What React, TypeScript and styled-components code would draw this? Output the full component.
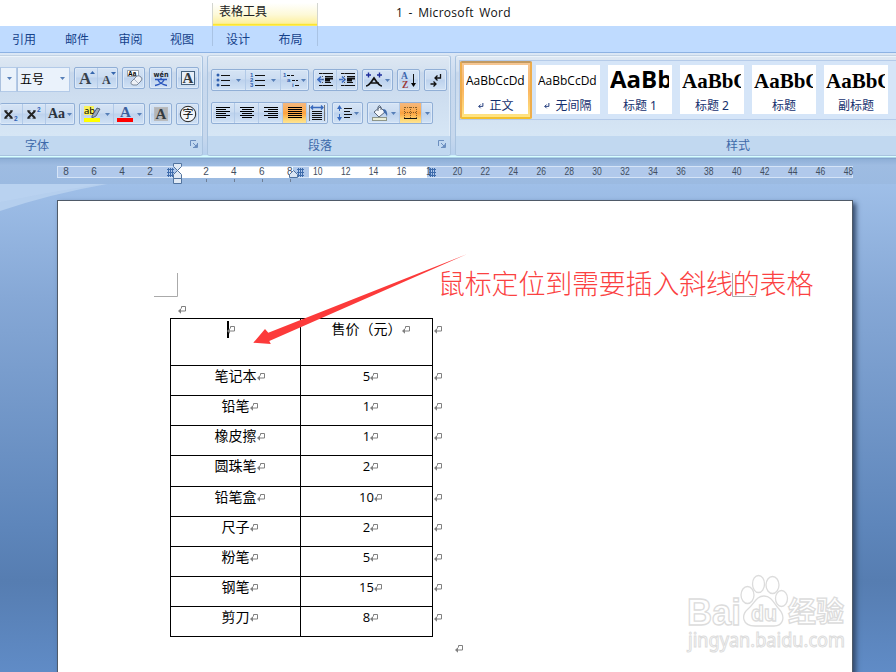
import React from 'react';
import styled, { createGlobalStyle, css } from 'styled-components';

const GlobalStyle = createGlobalStyle`
  * { box-sizing: border-box; }
  body { margin: 0; overflow: hidden; }
`;

const UI = '"Noto Sans", "Noto Sans CJK SC", sans-serif';

const Shell = styled.div`
  width: 896px;
  height: 672px;
  display: flex;
  flex-direction: column;
  overflow: hidden;
  font: 12px ${UI};
  background: #9fbfe8;
`;

const TitleBar = styled.header`
  flex: 0 0 26px;
  height: 26px;
  display: flex;
  background: #fff;
  color: #111;
`;

const ContextTitle = styled.div`
  margin: 3px 0 0 212px;
  width: 106px;
  height: 23px;
  padding-left: 6px;
  line-height: 18px;
  color: #222;
  background: linear-gradient(#fff, #fdf9d8 50%, #fdf0a0 88%, #fbe000 96%, #fff8c0);
  border: solid #d3d6d0;
  border-width: 0 1px;
`;

const WindowTitle = styled.div`
  margin-left: 78px;
  line-height: 26px;
  font-family: "Open Sans", "Noto Sans", sans-serif;
  font-size: 12px;
  letter-spacing: 0.3px;
  word-spacing: 2px;
  white-space: pre;
`;

const TabBar = styled.nav`
  flex: 0 0 27px;
  height: 27px;
  display: flex;
  background: #bfdbff;
  border-bottom: 1px solid #8db2e3;
  color: #15428b;
`;

const Tab = styled.div<{ $w: number }>`
  flex: 0 0 ${p => p.$w}px;
  height: 26px;
  text-align: center;
  line-height: 28px;
`;

const ContextTabs = styled.div`
  display: flex;
  margin-left: 3px;
  width: 106px;
  height: 20px;
  border: solid #a9c3e4;
  border-width: 0 1px;
`;

const Ribbon = styled.section`
  flex: 0 0 106px;
  display: flex;
  gap: 4px;
  padding-top: 2px;
  background: linear-gradient(#dce7f5, #c8d9ee 25%, #c7d8ed 80%, #b6d0ee 97%, #d7ffff 98%, #d7ffff 99%, #87a9d2);
  border-bottom: 1px solid #84a5cd;
`;

const Group = styled.div<{ $w: number; $first?: boolean }>`
  flex: 0 0 ${p => p.$w}px;
  height: 101px;
  display: flex;
  flex-direction: column;
  border: 1px solid #a9c3df;
  border-top-color: #c3d3e4;
  box-shadow: inset 0 1px #edf4fb, inset -1px 0 #e2edf8;
  border-radius: ${p => (p.$first ? '0 3px 3px 0' : '3px')};
  border-left-width: ${p => (p.$first ? 0 : 1)}px;
  background: linear-gradient(#dee8f3, #d4e1f0 15%, #c8d8ec 17%, #d6e6f5 80%);
  overflow: hidden;
`;

const GroupBody = styled.div<{ $pad?: string }>`
  flex: 0 0 80px;
  padding: ${p => p.$pad || 0};
`;

const GroupLabel = styled.div`
  flex: 1;
  display: grid;
  grid-template-columns: 14px 1fr 12px;
  align-items: center;
  background: #c1d8f0;
  color: #3e6aaa;
  text-align: center;
  line-height: 18px;
  svg { margin-bottom: 4px; }
`;

const ToolRow = styled.div<{ $top: number }>`
  display: flex;
  height: 22px;
  gap: 4px;
  margin-top: ${p => p.$top}px;
`;

const ComboPair = styled.div`
  display: flex;
  flex: 0 0 70px;
`;

const Combo = styled.div<{ $w: number }>`
  flex: 0 0 ${p => p.$w}px;
  height: 25px;
  display: flex;
  justify-content: space-between;
  align-items: center;
  padding: 0 4px 2px 2px;
  background: #eaf2fb;
  border: 1px solid #b3cae8;
  border-left-color: #abc1de;
  color: #000;
`;

const ButtonSet = styled.div<{ $open?: boolean }>`
  display: flex;
  height: 22px;
  border: 1px solid #91afd6;
  border-left-width: ${p => (p.$open ? 0 : 1)}px;
  border-radius: 2px;
  overflow: hidden;
  background: linear-gradient(#d6e4f5, #cbdcf1 45%, #bdd2ed 50%, #d1e2f5);
  box-shadow: inset 0 0 0 1px #dce9f8;
`;

const Button = styled.div<{ $w: number; $on?: boolean }>`
  flex: 0 0 ${p => p.$w}px;
  display: flex;
  align-items: center;
  justify-content: space-evenly;
  & + & { border-left: 1px solid #b2cae8; }
  ${p => p.$on && css`
    background: linear-gradient(#f4b77e, #fcae55 35%, #fda13e 50%, #fdd877 85%, #ffe394);
  `}
`;

const Glyph = styled.span`
  font: bold 14px "Liberation Serif", serif;
  color: #2b333c;
`;

const Gallery = styled.div`
  height: 60px;
  margin: 4px 0 0 3px;
  display: flex;
  background: #d5e5f8;
  border: 1px solid #b5cbe9;
  border-right: 0;
`;

const StyleTile = styled.div<{ $on?: boolean }>`
  flex: 0 0 72px;
  width: 72px;
  height: 58px;
  padding: 4px;
  ${p => p.$on && css`
    border: 2px solid;
    border-color: #c29a62 #eead4c #f3c02d #eead4c;
    border-radius: 2px;
    background: linear-gradient(#f5c694, #fbb660 50%, #ffe583);
    padding: 2px;
  `}
`;

const TileFace = styled.div`
  height: 49px;
  background: #fff;
  display: flex;
  flex-direction: column;
  color: #15306e;
`;

const Preview = styled.div<{ $font: string; $size: number; $bold?: boolean; $line: number }>`
  flex: 0 0 31px;
  height: 31px;
  margin: 0 3px 0 2px;
  overflow: hidden;
  white-space: nowrap;
  line-height: ${p => p.$line}px;
  color: #000;
  font-family: ${p => p.$font};
  font-size: ${p => p.$size}px;
  font-weight: ${p => (p.$bold ? 700 : 400)};
`;

const TileName = styled.div`
  display: flex;
  align-items: center;
  justify-content: center;
  gap: 5px;
  line-height: 19px;
  white-space: nowrap;
`;

const RulerBand = styled.div`
  flex: 0 0 25px;
  padding: 7px 0 0 57px;
  background: linear-gradient(#8fafd7, #9ebce2 25%, #9bbae1);
`;

const RulerSvg = styled.svg`
  display: block;
  font: 10px "Liberation Sans", sans-serif;
`;

const Workspace = styled.main`
  flex: 1;
  position: relative;
  padding: 16px 43px 0 57px;
  background: linear-gradient(#9fbfe8, #86a8d6 22%, #5e86bb 66%, #567db1 77%, #6390cd);
`;

const Overlay = styled.svg`
  position: absolute;
  left: 0;
  top: 0;
`;

const Page = styled.article`
  position: relative;
  height: 500px;
  padding: 100px 0 0 112px;
  background: #fff;
  border: 1px solid #4f5a68;
  box-shadow: 3px 3px 5px #33496b;
`;

const Mark = styled.div<{ $left: number; $top?: number }>`
  height: 17px;
  padding: ${p => p.$top || 0}px 0 0 ${p => p.$left}px;
`;

const Table = styled.div`
  width: 272px;
  display: grid;
  grid-template-columns: 130px 132px 10px;
`;

const Cell = styled.div<{ $h: number; $last?: boolean; $digits?: boolean; $pull?: number }>`
  height: ${p => p.$h + (p.$last ? 1 : 0)}px;
  display: flex;
  justify-content: center;
  align-items: flex-start;
  padding-right: ${p => p.$pull || 0}px;
  border: solid #000;
  border-width: 1px 0 ${p => (p.$last ? 1 : 0)}px 1px;
  font-family: ${p => (p.$digits ? '"Open Sans", sans-serif' : '"Noto Sans CJK SC", sans-serif')};
  font-size: ${p => (p.$digits ? 13 : 14)}px;
  line-height: ${p => (p.$digits ? 20 : 19)}px;
  color: #000;
  svg { margin: 7px -8px 0 0; flex: none; }
`;

const RowEnd = styled.div`
  border-left: 1px solid #000;
  padding: 8px 0 0 1px;
  svg { display: block; }
`;

const Caret = styled.i`
  width: 2px;
  height: 17px;
  margin: 2px -2px 0 0;
  background: #000;
`;

const Callout = styled.div`
  position: absolute;
  left: 438px;
  top: 79px;
  white-space: nowrap;
  font: 300 27px/40px "Noto Sans CJK SC", sans-serif;
  letter-spacing: -0.2px;
  color: #fb4141;
`;

const Arrow = ({ c = '#567fb8' }: { c?: string }) => (
  <svg width="5" height="3" viewBox="0 0 5 3"><path d="M0 0h5L2.5 3z" fill={c} /></svg>
);

const Return = ({ c = '#808080' }: { c?: string }) => (
  <svg width="8" height="8" viewBox="0 0 8 8" fill="none" stroke={c}>
    <path d="M3.5 2.5v-2h4v4.500H2" />
    <path d="M0 5L3 2.200v5.600z" fill={c} stroke="none" />
  </svg>
);

const Hook = ({ c = '#777', size = 8 }: { c?: string; size?: number }) => (
  <svg width={size} height={size} viewBox="0 0 8 8" fill="none" stroke={c} strokeWidth="1.300">
    <path d="M6.500 0v4.500H1M3.500 2l-2.500 2.500L3.500 7" />
  </svg>
);

const Launcher = () => (
  <svg width="8" height="8" viewBox="0 0 8 8" fill="none" stroke="#6b8ebf">
    <path d="M.5 6V.5H6" /><path d="M3 3l3 3M7.500 3v4.500H3" /><path d="M4 7l3-3v3z" fill="#6b8ebf" stroke="none" />
  </svg>
);

const Lines = ({ rows, w = 16 }: { rows: [number, number][]; w?: number }) => (
  <svg width={w} height="14" viewBox={`0 0 ${w} 14`} shapeRendering="crispEdges">
    {rows.map(([a, b], i) => <path key={i} d={`M${a} ${i * 2 + 1.5}H${b}`} stroke="#000" />)}
  </svg>
);

const ListIcon = ({ kind }: { kind: string }) => (
  <svg width="16" height="16" viewBox="0 0 16 16" fontFamily="Liberation Sans" fontWeight="bold" fontSize="6" fill="#2f5fae">
    {kind === 'dots' && [3, 8, 13].map(y => (
      <g key={y}><circle cx="2" cy={y} r="1.500" /><path d={`M5 ${y + 0.5}h9`} stroke="#111" /></g>
    ))}
    {kind === 'nums' && [3, 8, 13].map((y, i) => (
      <g key={y}><text x="0" y={y + 2}>{i + 1}</text><path d={`M5 ${y + 0.5}h10`} stroke="#111" /></g>
    ))}
    {kind === 'tree' && (
      <g>
        <text x="0" y="5">1</text><text x="4" y="10">a</text><text x="9" y="15">i</text>
        <path d="M4 3.500h7M9 8.500h6" stroke="#111" strokeDasharray="3 1" /><path d="M12 13.500h4" stroke="#111" />
      </g>
    )}
  </svg>
);

const Indent = ({ right }: { right?: boolean }) => (
  <svg width="17" height="16" viewBox="0 0 17 16" fill="none">
    <path d="M2 1.500h14M8 4.500h8M8 10.500h6M2 13.500h14" stroke="#111" />
    <path d="M8 6.500h8M8 8.500h5" stroke="#111" strokeWidth="2" />
    <path d={right ? 'M0 7.500h4M3 4.500l3 3-3 3' : 'M2 7.500h5M4 4.500l-3 3 3 3'} stroke="#3d6cc0" strokeWidth="1.600" />
    <path d="M5.500 1v14" stroke="#555" strokeDasharray="1 2" />
  </svg>
);

const Eraser = () => (
  <svg width="18" height="18" viewBox="0 0 18 18">
    <path d="M2.500 1.500h11v6h-11z" fill="#fff" stroke="#77818d" strokeWidth=".7" />
    <text x="3" y="7" fontSize="6.500" fontFamily="Liberation Sans" fontWeight="bold">Aa</text>
    <path d="M6 13l6-6q2-1 4 1t0 4l-4 4H8q-3-1-2-3z" fill="#eef1f6" stroke="#7b8799" />
    <path d="M9 10l4 4" stroke="#a9b3c3" />
  </svg>
);

const Pinyin = () => (
  <svg width="18" height="18" viewBox="0 0 18 18">
    <text x="1.500" y="8" fontSize="7.500" fontFamily="DejaVu Sans" fontWeight="bold" textLength="15" lengthAdjust="spacingAndGlyphs" fill="#20242c">wén</text>
    <path d="M3 10.500h12M6 11q2 4 9 5.500M12 11q-2 4-9 5.500M9 8.500v2" fill="none" stroke="#2855bd" strokeWidth="1.400" />
  </svg>
);

const BoxedA = ({ filled }: { filled?: boolean }) => (
  <svg width="18" height="18" viewBox="0 0 18 18">
    <rect x="2.500" y="2.500" width="13" height="13" fill={filled ? '#b3b5b8' : '#e8eff8'} stroke={filled ? '#b9bbbd' : '#45627f'} />
    <text x="9" y="14" textAnchor="middle" fontSize="15" fontWeight="bold" fontFamily="Liberation Serif" fill="#333a40">A</text>
  </svg>
);

const Circled = () => (
  <svg width="18" height="18" viewBox="0 0 18 18">
    <circle cx="9" cy="9" r="7.700" fill="#f3f6fa" stroke="#222" />
    <text x="9" y="13" textAnchor="middle" fontSize="11" fontFamily="Noto Sans CJK SC">字</text>
  </svg>
);

const Highlighter = () => (
  <svg width="18" height="18" viewBox="0 0 18 18">
    <path d="M1 1h10v9H1z" fill="#faf35c" />
    <text x="1" y="9" fontSize="9.500" fontFamily="Noto Sans">ab</text>
    <path d="M9 11l5-8 3 1-4 7-4 2z" fill="#9caabd" stroke="#3b4a5f" strokeWidth=".8" />
    <path d="M1 13h16v4H1z" fill="#ff0" />
  </svg>
);

const FontColor = () => (
  <svg width="18" height="18" viewBox="0 0 18 18">
    <text x="9.500" y="11.500" textAnchor="middle" fontSize="15" fontWeight="bold" fontFamily="Liberation Serif" fill="#3b5f9d">A</text>
    <path d="M1 13h16v4H1z" fill="#f00" />
  </svg>
);

const GrowA = ({ up }: { up?: boolean }) => (
  <svg width="18" height="18" viewBox="0 0 18 18">
    <text x={up ? 2 : 3} y="14.500" fontSize={up ? 17 : 12} fontWeight="bold" fontFamily="Liberation Serif" fill="#39424c">A</text>
    <path d={up ? 'M13 5l2.500-3L18 5z' : 'M12 3h5l-2.500 3z'} fill="#3566ad" />
  </svg>
);

const Script = ({ sup }: { sup?: boolean }) => (
  <svg width="18" height="18" viewBox="0 0 18 18">
    <path d="M3 6l7 7M10 6l-7 7" stroke="#222" strokeWidth="1.900" />
    <path d="M2 5.800h3.500M8 5.800h3M2 13.200h3.500M7.500 13.200H11" stroke="#222" strokeWidth=".8" />
    <text x="12" y={sup ? 7 : 16} fontSize="6.500" fontWeight="bold" fontFamily="Liberation Sans" fill="#2f61b5">2</text>
  </svg>
);

const ScaleA = () => (
  <svg width="18" height="16" viewBox="0 0 18 16" fill="none">
    <path d="M1 14q3 0 8-8 5 8 8 8M5 11h9" stroke="#111" strokeWidth="1.700" />
    <path d="M1 3h5M3.500 .5v5M12 3h5M14.500 .5v5" stroke="#1e2e9c" strokeWidth="1.400" />
  </svg>
);

const SortIcon = () => (
  <svg width="16" height="18" viewBox="0 0 16 18">
    <text x="0" y="8" fontSize="9.500" fontWeight="bold" fontFamily="Liberation Serif" fill="#3c66ad">A</text>
    <text x="1" y="17" fontSize="9.500" fontWeight="bold" fontFamily="Liberation Serif" fill="#9c3a3a">Z</text>
    <path d="M12.500 3v11" stroke="#111" /><path d="M10 12h5l-2.500 4z" />
  </svg>
);

const ParaMarks = () => (
  <svg width="14" height="16" viewBox="0 0 14 16" fill="none" stroke="#111" strokeWidth="1.300">
    <path d="M11.500 2v4H6M8.500 3.500L6 6l2.500 2.500M1.500 12h5M4.500 9.500L7 12l-2.500 2.500" />
  </svg>
);

const Distribute = () => (
  <svg width="18" height="18" viewBox="0 0 18 18" fill="none">
    <path d="M1.500 1v16M16.500 1v16" stroke="#777" />
    <path d="M3 3.500h12M5 1.500l-2 2 2 2M13 1.500l2 2-2 2" stroke="#3668bc" strokeWidth="1.300" />
    <path d="M4 7.500h10M4 9.500h10M4 11.500h10M4 13.500h10M4 15.500h10" stroke="#111" shapeRendering="crispEdges" />
  </svg>
);

const Spacing = () => (
  <svg width="16" height="18" viewBox="0 0 16 18" fill="none">
    <path d="M3.500 2v14" stroke="#3668bc" strokeDasharray="5 3" />
    <path d="M1 5l2.500-4L6 5zM1 13l2.500 4L6 13z" fill="#3668bc" />
    <path d="M7.500 4.500H16M7.500 7.500H14M7.500 10.500H16M7.500 13.500H14" stroke="#111" shapeRendering="crispEdges" />
  </svg>
);

const Bucket = () => (
  <svg width="18" height="18" viewBox="0 0 18 18">
    <path d="M3 8l6-5 5 5-6 5z" fill="#f3f6fa" stroke="#59677a" />
    <path d="M7 7V3q1-3 3 0v3" fill="none" stroke="#59677a" />
    <path d="M12 5q5 0 4 8-1-4-3-4z" fill="#426cab" />
    <rect x="1.500" y="13.500" width="14" height="3" fill="#e9edd8" stroke="#8e968a" />
  </svg>
);

const Borders = () => (
  <svg width="15" height="16" viewBox="0 0 15 16" fill="none">
    <path d="M1.500 2.500h12M1.500 7.500h12M1.500 2v11M7.500 2v11M13.500 2v11" stroke="#835c28" strokeDasharray="1 1" shapeRendering="crispEdges" />
    <path d="M1 13.500h13" stroke="#111" />
  </svg>
);

const GridHandle = ({ x }: { x: number }) => (
  <g transform={`translate(${x} 2)`} shapeRendering="crispEdges">
    <path d="M0 1.500h7M0 4.500h7M0 7.500h7M1.500 0v9M3.500 0v9M5.500 0v9" stroke="#3f6cac" />
  </g>
);

const ruler: [number, string][] = [];
for (let n = 8; n >= 2; n -= 2) ruler.push([9 + (8 - n) * 14, String(n)]);
for (let n = 2; n <= 48; n += 2) if (n !== 18) ruler.push([121 + n * 13.97, String(n)]);

const Ruler = () => (
  <RulerSvg width="810" height="18" viewBox="0 0 810 18">
    <rect x=".5" y=".5" width="795" height="11" fill="#b1c9eb" stroke="#d5e4f7" />
    <rect x="121" y="1" width="115" height="11" fill="#fff" />
    <rect x="252" y="1" width="118" height="11" fill="#fff" />
    {ruler.map(([x, t]) => (
      <text key={x} x={x} y="9" textAnchor="middle" fill="#424e60" {...(t.length > 1 ? { textLength: 9.5 } : {})} lengthAdjust="spacingAndGlyphs">{t}</text>
    ))}
    <text x="369" y="9" fill="#424e60">1</text>
    <path d="M149.500 13v3M177.500 13v3M205.500 13v3M233.500 13v3" stroke="#6f7f96" />
    <GridHandle x={110} /><GridHandle x={240} /><GridHandle x={372} />
    <path d="M232.500 11.500V8.500l4-4 4 4v3z" fill="#dae5f3" stroke="#52749f" />
  </RulerSvg>
);

const IndentHandle = styled.svg`
  position: absolute;
  left: 172px;
  top: -21px;
`;

const rows: [string, string, number][] = [
  ['', '售价（元）', 47], ['笔记本', '5', 30], ['铅笔', '1', 30], ['橡皮擦', '1', 30], ['圆珠笔', '2', 31],
  ['铅笔盒', '10', 30], ['尺子', '2', 30], ['粉笔', '5', 30], ['钢笔', '15', 30], ['剪刀', '8', 30],
];

const SERIF = '"Liberation Serif", serif';
const SANS = '"Open Sans", sans-serif';
const tiles = [
  { name: '正文', text: 'AaBbCcDd', font: SANS, size: 12, line: 31, mark: true },
  { name: '无间隔', text: 'AaBbCcDd', font: SANS, size: 12, line: 31, mark: true },
  { name: '标题 1', text: 'AaBb', font: SANS, size: 24, line: 28, bold: true },
  { name: '标题 2', text: 'AaBbC', font: SERIF, size: 21, line: 33, bold: true },
  { name: '标题', text: 'AaBbC', font: SERIF, size: 21, line: 33, bold: true },
  { name: '副标题', text: 'AaBbC', font: SERIF, size: 21, line: 33, bold: true },
];

const LabelText = styled.span<{ $shift: number }>`
  margin-left: ${p => Math.max(p.$shift, 0) * 2}px;
  margin-right: ${p => Math.max(-p.$shift, 0) * 2}px;
`;

const FontGroup = () => (
  <Group $w={203} $first>
    <GroupBody>
      <ToolRow $top={11}>
        <ComboPair>
          <Combo $w={17}><span /><Arrow /></Combo>
          <Combo $w={53}>五号<Arrow /></Combo>
        </ComboPair>
        <ButtonSet><Button $w={22}><GrowA up /></Button><Button $w={20}><GrowA /></Button></ButtonSet>
        <ButtonSet><Button $w={21}><Eraser /></Button></ButtonSet>
        <ButtonSet><Button $w={21}><Pinyin /></Button></ButtonSet>
        <ButtonSet><Button $w={21}><BoxedA /></Button></ButtonSet>
      </ToolRow>
      <ToolRow $top={14}>
        <ButtonSet $open>
          <Button $w={22}><Script /></Button>
          <Button $w={23}><Script sup /></Button>
          <Button $w={29}><Glyph>Aa</Glyph><Arrow /></Button>
        </ButtonSet>
        <ButtonSet>
          <Button $w={33}><Highlighter /><Arrow /></Button>
          <Button $w={31}><FontColor /><Arrow /></Button>
        </ButtonSet>
        <ButtonSet><Button $w={21}><BoxedA filled /></Button></ButtonSet>
        <ButtonSet><Button $w={21}><Circled /></Button></ButtonSet>
      </ToolRow>
    </GroupBody>
    <GroupLabel><span /><LabelText $shift={-65}>字体</LabelText><Launcher /></GroupLabel>
  </Group>
);

const all = (a: number, b: number): [number, number][] => Array(6).fill([a, b]);

const ParagraphGroup = () => (
  <Group $w={244}>
    <GroupBody $pad="0 0 0 3px">
      <ToolRow $top={13}>
        <ButtonSet>
          <Button $w={33}><ListIcon kind="dots" /><Arrow /></Button>
          <Button $w={35}><ListIcon kind="nums" /><Arrow /></Button>
          <Button $w={28}><ListIcon kind="tree" /><Arrow /></Button>
        </ButtonSet>
        <ButtonSet><Button $w={22}><Indent /></Button><Button $w={21}><Indent right /></Button></ButtonSet>
        <ButtonSet><Button $w={29}><ScaleA /><Arrow /></Button></ButtonSet>
        <ButtonSet><Button $w={21}><SortIcon /></Button></ButtonSet>
        <ButtonSet><Button $w={21}><ParaMarks /></Button></ButtonSet>
      </ToolRow>
      <ToolRow $top={11}>
        <ButtonSet>
          <Button $w={22}><Lines rows={[[1, 15], [1, 11], [1, 15], [1, 11], [1, 15], [1, 11]]} /></Button>
          <Button $w={24}><Lines rows={[[1, 15], [3, 13], [1, 15], [3, 13], [1, 15], [3, 13]]} /></Button>
          <Button $w={24}><Lines rows={[[1, 15], [5, 15], [1, 15], [5, 15], [1, 15], [5, 15]]} /></Button>
          <Button $w={24} $on><Lines rows={all(1, 15)} /></Button>
          <Button $w={21}><Distribute /></Button>
        </ButtonSet>
        <ButtonSet><Button $w={29}><Spacing /><Arrow /></Button></ButtonSet>
        <ButtonSet>
          <Button $w={31}><Bucket /><Arrow /></Button>
          <Button $w={22} $on><Borders /></Button>
          <Button $w={11}><Arrow /></Button>
        </ButtonSet>
      </ToolRow>
    </GroupBody>
    <GroupLabel><span /><LabelText $shift={-10}>段落</LabelText><Launcher /></GroupLabel>
  </Group>
);

const StylesGroup = () => (
  <Group $w={560}>
    <GroupBody>
      <Gallery>
        {tiles.map((t, i) => (
          <StyleTile key={t.name} $on={i === 0}>
            <TileFace>
              <Preview $font={t.font} $size={t.size} $bold={t.bold} $line={t.line}>{t.text}</Preview>
              <TileName>{t.mark && <Hook c="#223c7c" size={6} />}{t.name}</TileName>
            </TileFace>
          </StyleTile>
        ))}
      </Gallery>
    </GroupBody>
    <GroupLabel><span /><LabelText $shift={2}>样式</LabelText><span /></GroupLabel>
  </Group>
);

const Watermark = () => (
  <g fill="#fff" stroke="#dcdcdc" strokeWidth="1.300">
    <text x="687" y="441" fontFamily="Liberation Sans" fontWeight="bold" fontSize="36" textLength="54" lengthAdjust="spacingAndGlyphs">Bai</text>
    <ellipse cx="747.500" cy="411" rx="6.500" ry="8.500" />
    <ellipse cx="758.500" cy="400" rx="6" ry="8.500" />
    <ellipse cx="772.500" cy="401" rx="6.500" ry="8.500" />
    <ellipse cx="781.500" cy="414.500" rx="6" ry="8" />
    <path d="M764 412c8 0 10 8 15 13 7 8 4 17-5 17H755c-13 0-14-11-7-17s8-13 16-13z" />
    <text x="751" y="437" fontFamily="Liberation Sans" fontWeight="bold" fontSize="22" textLength="26" lengthAdjust="spacingAndGlyphs">du</text>
    <text x="788" y="438" fontFamily="Noto Sans CJK SC" fontWeight="bold" fontSize="28" textLength="56">经验</text>
    <text x="688" y="463" fontFamily="Noto Sans" fontSize="19" strokeWidth="1" textLength="157" lengthAdjust="spacingAndGlyphs">jingyan.baidu.com</text>
  </g>
);

export default function App() {
  return (
    <Shell>
      <GlobalStyle />
      <TitleBar>
        <ContextTitle>表格工具</ContextTitle>
        <WindowTitle>{'1 - Microsoft Word'}</WindowTitle>
      </TitleBar>
      <TabBar>
        <Tab $w={48}>引用</Tab>
        <Tab $w={58}>邮件</Tab>
        <Tab $w={49}>审阅</Tab>
        <Tab $w={54}>视图</Tab>
        <ContextTabs><Tab $w={50}>设计</Tab><Tab $w={55}>布局</Tab></ContextTabs>
      </TabBar>
      <Ribbon><FontGroup /><ParagraphGroup /><StylesGroup /></Ribbon>
      <RulerBand><Ruler /></RulerBand>
      <Workspace>
        <Overlay width="110" height="30">
          <path d="M0 0H107Q50 10 0 27z" fill="#b5cfee" /><path d="M0 0H100Q50 8 0 18z" fill="#bcd4f1" opacity=".6" />
        </Overlay>
        <IndentHandle width="11" height="22" viewBox="0 0 11 22" fill="#e1eaf5" stroke="#52749f">
          <path d="M1.500 .5h8v3l-4 4 4 4v4h-8v-4l4-4-4-4z" /><path d="M1.500 15.500h8v5h-8z" />
        </IndentHandle>
        <Page>
          <Mark $left={8}><Return /></Mark>
          <Table>
            {rows.map(([a, b, h], i) => (
              <React.Fragment key={a}>
                <Cell $h={h} $last={i === 9} $pull={a ? 0 : 18}>{a || <Caret />}<Return /></Cell>
                <Cell $h={h} $last={i === 9} $digits={i > 0}>{b}<Return /></Cell>
                <RowEnd><Return /></RowEnd>
              </React.Fragment>
            ))}
          </Table>
          <Mark $left={285} $top={3}><Return /></Mark>
        </Page>
        <Overlay width="896" height="488">
          <path d="M177.500 89v23.500H154M732.500 89v23.500H756" fill="none" stroke="#aaa" />
          <path d="M253.300 158.700L265 145l3.300 3.700L466.700 70.300 269.300 157l1.500 3z" fill="#fc3a3a" />
          <Watermark />
        </Overlay>
        <Callout>鼠标定位到需要插入斜线的表格</Callout>
      </Workspace>
    </Shell>
  );
}
